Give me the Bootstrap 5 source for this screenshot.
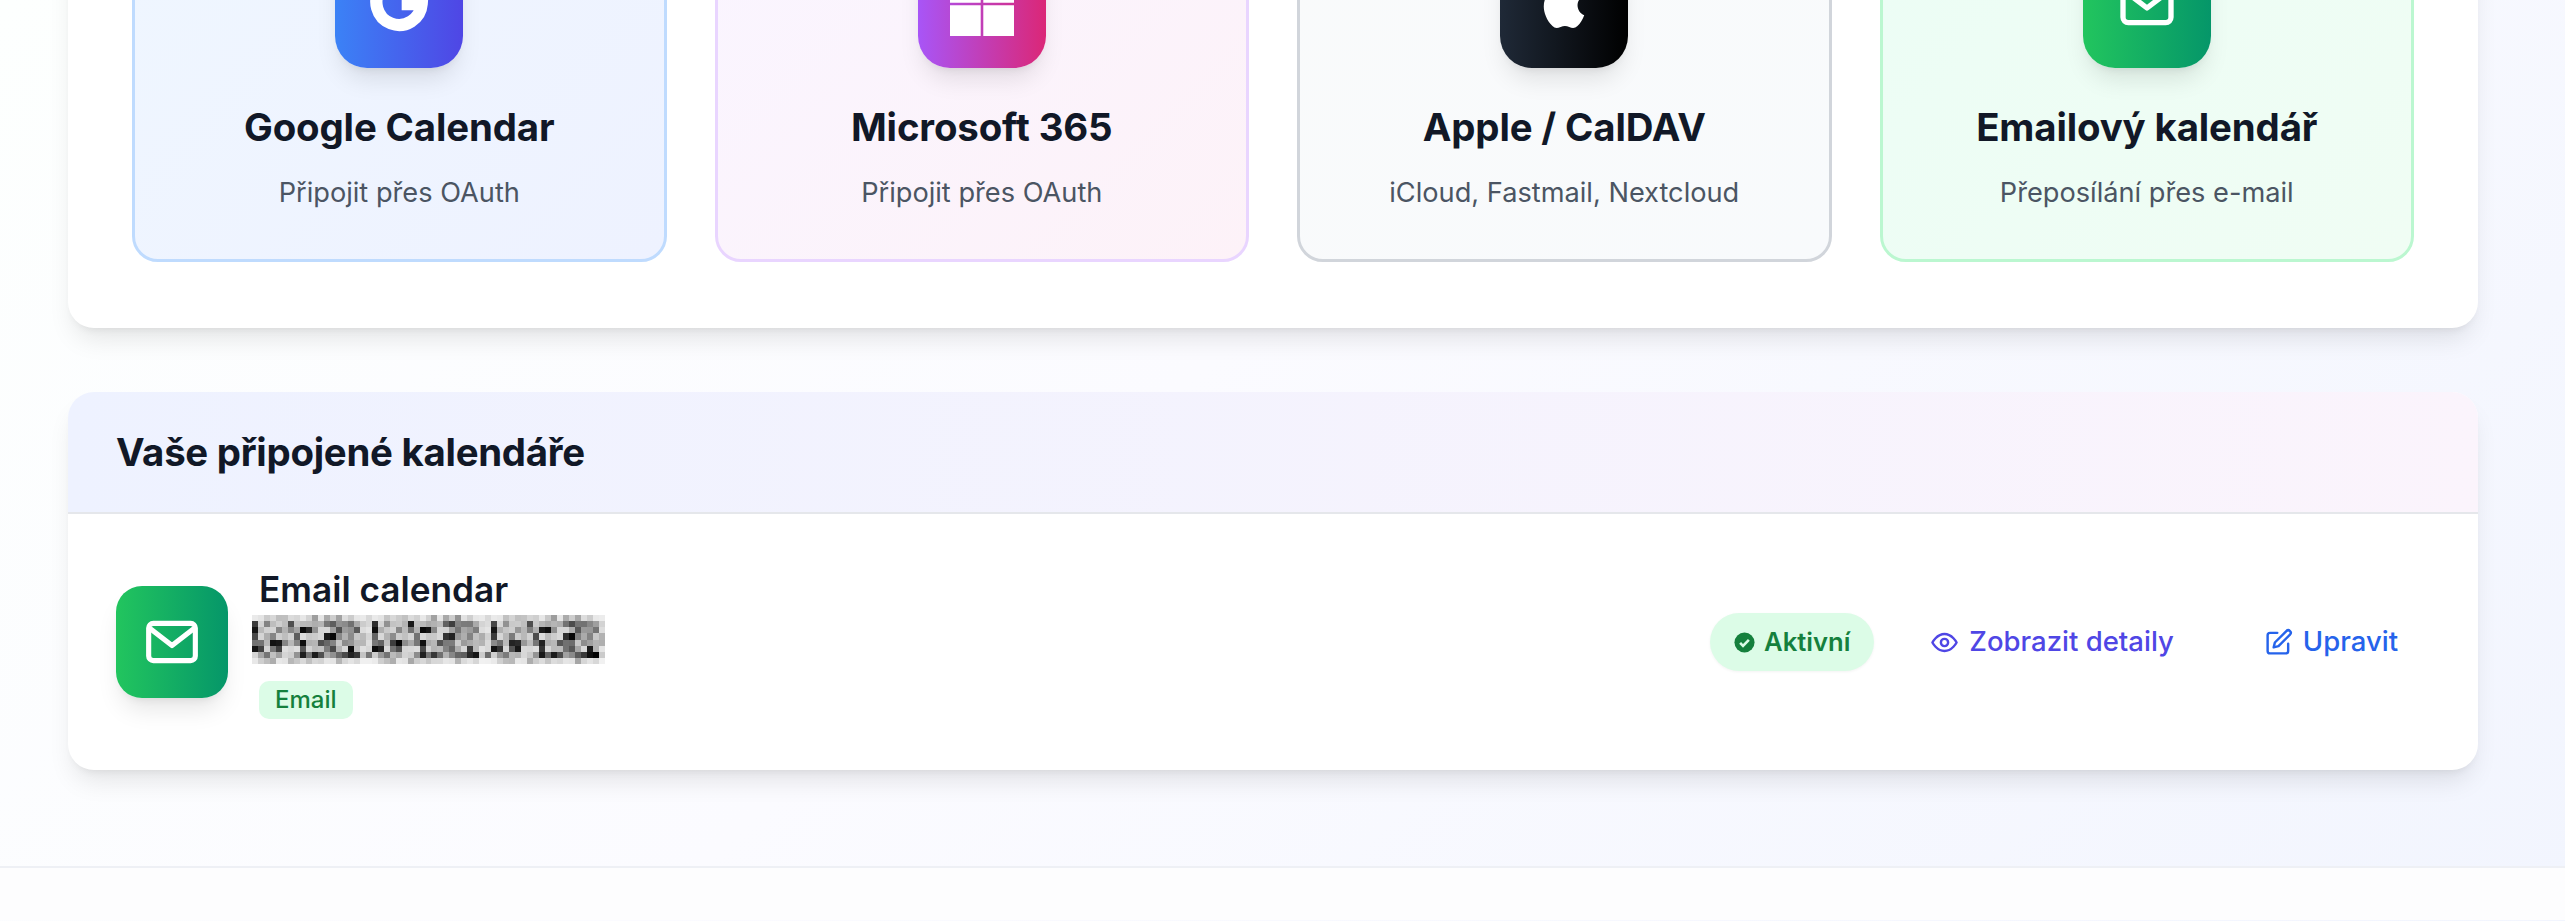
<!DOCTYPE html>
<html lang="cs">
<head>
    <meta charset="UTF-8">
    <meta name="viewport" content="width=device-width, initial-scale=1">
    <title>Kalendáře</title>
    <link href="https://cdn.jsdelivr.net/npm/bootstrap@5.3.0/dist/css/bootstrap.min.css" rel="stylesheet">
    <style>
        html, body { height: 921px; overflow: hidden; }
        body {
            font-family: Inter, "Noto Sans", sans-serif;
            color: #111827;
            background: linear-gradient(135deg, #fdfffe 0%, #fbfbff 45%, #f2f5fe 100%);
        }
        .page-main { height: 931px; padding: 0 87px 0 68px; margin-top: -65px; }
        .panel { background: #fff; border-radius: 26px; box-shadow: 0 16px 26px -6px rgba(0,0,0,.1), 0 6px 10px -6px rgba(0,0,0,.09); }
        .panel-top { height: 393px; padding: 0 64px; margin-bottom: 64px; }
        .provider-grid { display: grid; grid-template-columns: repeat(4, 1fr); gap: 48px; height: 327px; }
        .provider {
            border: 3.2px solid; border-radius: 26px; text-align: center;
            display: flex; flex-direction: column; align-items: center;
        }
        .provider-google { background: linear-gradient(135deg, #eff6ff, #eef2ff); border-color: #bfdbfe; }
        .provider-ms { background: linear-gradient(135deg, #faf5ff, #fdf2f8); border-color: #e9d5ff; }
        .provider-apple { background: linear-gradient(135deg, #f9fafb, #f8fafc); border-color: #d1d5db; }
        .provider-mail { background: linear-gradient(135deg, #ecfdf5, #f0fdf4); border-color: #bbf7d0; }
        .tile { width: 128px; height: 128px; border-radius: 32px; display: flex; align-items: center; justify-content: center; color: #fff; box-shadow: 0 16px 24px -5px rgba(0,0,0,.1), 0 6px 10px -6px rgba(0,0,0,.1); flex: none; }
        .tile-google { background: linear-gradient(90deg, #3b82f6, #4f46e5); }
        .tile-ms { background: linear-gradient(90deg, #a855f7, #db2777); }
        .tile-apple { background: linear-gradient(90deg, #1f2937, #000); }
        .tile-mail { background: linear-gradient(90deg, #22c55e, #059669); }
        .provider .tile { margin-top: 2px; margin-bottom: 34px; }
        .provider-name { font-size: 38.4px; line-height: 51px; font-weight: 700; letter-spacing: -.13px; margin: 0 0 21px; color: #111827; }
        .provider-note { font-size: 27.2px; line-height: 38px; color: #4b5563; margin: 0; }
        .panel-list { height: 378px; overflow: hidden; }
        .list-head { height: 122px; padding: 0 48px; display: flex; align-items: center; background: linear-gradient(90deg, #eef2ff, #fbf4fc); border-bottom: 2px solid #e5e7eb; }
        .list-head h2 { font-size: 38.4px; font-weight: 700; letter-spacing: -.27px; margin: 0; color: #111827; }
        .list-row { display: flex; align-items: center; height: 256px; padding: 0 48px; }
        .row-icon { width: 112px; height: 112px; border-radius: 26px; margin-right: 31px; }
        .row-title { font-size: 35.2px; line-height: 48px; font-weight: 600; margin: 0; color: #111827; }
        .row-blur { display: block; width: 353px; height: 49px; margin: 2px 0 0 -7px; }
        .type-chip { display: inline-block; font-size: 24px; line-height: 32px; padding: 3px 16px; margin-top: 17px; border-radius: 10px; background: #dcfce7; color: #15803d; font-weight: 500; }
        .status-pill { display: inline-flex; align-items: center; gap: 9px; height: 58px; padding: 0 24px; border-radius: 29px; background: #dcfce7; color: #15803d; font-size: 25.6px; font-weight: 600; margin-right: 56px; box-shadow: 0 1px 3px rgba(0,0,0,.05); }
        .row-link { display: inline-flex; align-items: center; gap: 10px; font-size: 27.5px; font-weight: 500; text-decoration: none; }
        .link-detail { color: #4f46e5; margin-right: 90px; }
        .link-edit { color: #2563eb; margin-right: 32px; }
        .page-foot { height: 54px; background: #fdfdfe; border-top: 2px solid #eef0f5; }
    </style>
</head>
<body>
    <main class="page-main">
        <section class="panel panel-top">
            <div class="provider-grid">
                <div class="provider provider-google">
                    <div class="tile tile-google">
                        <svg width="64" height="64" viewBox="0 0 24 24"><path fill="none" stroke="#fff" stroke-width="4.6" d="M19 6.5A8.5 8.5 0 1 0 20.5 12H13"/></svg>
                    </div>
                    <h3 class="provider-name">Google Calendar</h3>
                    <p class="provider-note">Připojit přes OAuth</p>
                </div>
                <div class="provider provider-ms">
                    <div class="tile tile-ms">
                        <svg width="64" height="64" viewBox="0 0 64 64" fill="#fff"><path d="M0 0h30.7v30.7H0zM33.3 0H64v30.7H33.3zM0 33.3h30.7V64H0zM33.3 33.3H64V64H33.3z"/></svg>
                    </div>
                    <h3 class="provider-name">Microsoft 365</h3>
                    <p class="provider-note">Připojit přes OAuth</p>
                </div>
                <div class="provider provider-apple">
                    <div class="tile tile-apple">
                        <svg width="64" height="64" viewBox="0 0 24 24" fill="#fff"><path d="M17.05 20.28c-.98.95-2.05.8-3.08.35-1.09-.46-2.09-.48-3.24 0-1.44.62-2.2.44-3.06-.35C2.79 15.25 3.51 7.59 9.05 7.31c1.35.07 2.29.74 3.08.8 1.18-.24 2.31-.93 3.57-.84 1.51.12 2.65.72 3.4 1.8-3.12 1.87-2.38 5.98.48 7.13-.57 1.5-1.31 2.99-2.54 4.09zM12.03 7.25c-.15-2.23 1.66-4.07 3.74-4.25.29 2.58-2.34 4.5-3.74 4.25z"/></svg>
                    </div>
                    <h3 class="provider-name">Apple / CalDAV</h3>
                    <p class="provider-note">iCloud, Fastmail, Nextcloud</p>
                </div>
                <div class="provider provider-mail">
                    <div class="tile tile-mail">
                        <svg width="64" height="64" viewBox="0 0 24 24" fill="none" stroke="#fff" stroke-width="2" stroke-linecap="round" stroke-linejoin="round"><rect x="3" y="5" width="18" height="14" rx="2"/><path d="m3.5 7 8.5 6.5L20.5 7"/></svg>
                    </div>
                    <h3 class="provider-name">Emailový kalendář</h3>
                    <p class="provider-note">Přeposílání přes e-mail</p>
                </div>
            </div>
        </section>

        <section class="panel panel-list">
            <div class="list-head"><h2>Vaše připojené kalendáře</h2></div>
            <div class="list-row">
                <div class="tile tile-mail row-icon">
                    <svg width="56" height="56" viewBox="0 0 24 24" fill="none" stroke="#fff" stroke-width="2.2" stroke-linecap="round" stroke-linejoin="round"><rect x="2" y="4" width="20" height="16" rx="2"/><path d="m3 6.5 9 7 9-7"/></svg>
                </div>
                <div class="flex-grow-1">
                    <p class="row-title">Email calendar</p>
                    <svg class="row-blur" id="blurBlock" viewBox="0 0 59 8" shape-rendering="crispEdges" preserveAspectRatio="none"></svg>
                    <span class="type-chip">Email</span>
                </div>
                <span class="status-pill">
                    <svg width="21" height="21" viewBox="0 0 24 24"><circle cx="12" cy="12" r="11.5" fill="#15803d"/><path d="m7 12.5 3.3 3.3L17 9" fill="none" stroke="#dcfce7" stroke-width="3"/></svg>
                    Aktivní
                </span>
                <a class="row-link link-detail" href="#">
                    <svg width="29" height="29" viewBox="0 0 24 24" fill="none" stroke="currentColor" stroke-width="2" stroke-linecap="round" stroke-linejoin="round"><path d="M2 12s3.6-7 10-7 10 7 10 7-3.6 7-10 7-10-7-10-7z"/><circle cx="12" cy="12" r="3"/></svg>
                    Zobrazit detaily
                </a>
                <a class="row-link link-edit" href="#">
                    <svg width="29" height="29" viewBox="0 0 24 24" fill="none" stroke="currentColor" stroke-width="2" stroke-linecap="round" stroke-linejoin="round"><path d="M11 4H5a2 2 0 0 0-2 2v13a2 2 0 0 0 2 2h13a2 2 0 0 0 2-2v-6"/><path d="M18.5 2.5a2.1 2.1 0 0 1 3 3L12 15l-4 1 1-4z"/></svg>
                    Upravit
                </a>
            </div>
        </section>
    </main>
    <footer class="page-foot"></footer>

    <script>
        // mosaic over the hidden address: same word block three times
        const blur = document.getElementById("blurBlock");
        let seed = 7;
        const rnd = () => (seed = (seed * 16807) % 2147483647) / 2147483647;
        const env = [.16, .46, .55, .42, .6, .44, .54, .14];
        const word = env.map(e => Array.from({length: 20}, (_, c) => Math.min(.95, e * (.25 + rnd() * rnd() * 2.6) * (c > 17 ? .45 : 1))));
        let cells = "";
        for (let y = 0; y < 8; y++) {
            for (let x = 0; x < 59; x++) {
                const v = word[y][x % 20] * (.85 + rnd() * .3);
                const g = Math.round(244 - v * 225);
                cells += `<rect x="${x}" y="${y}" width="1.02" height="1.02" fill="rgb(${g},${g},${g})"/>`;
            }
        }
        blur.innerHTML = cells;
    </script>
    <script src="https://cdn.jsdelivr.net/npm/bootstrap@5.3.0/dist/js/bootstrap.bundle.min.js"></script>
</body>
</html>
